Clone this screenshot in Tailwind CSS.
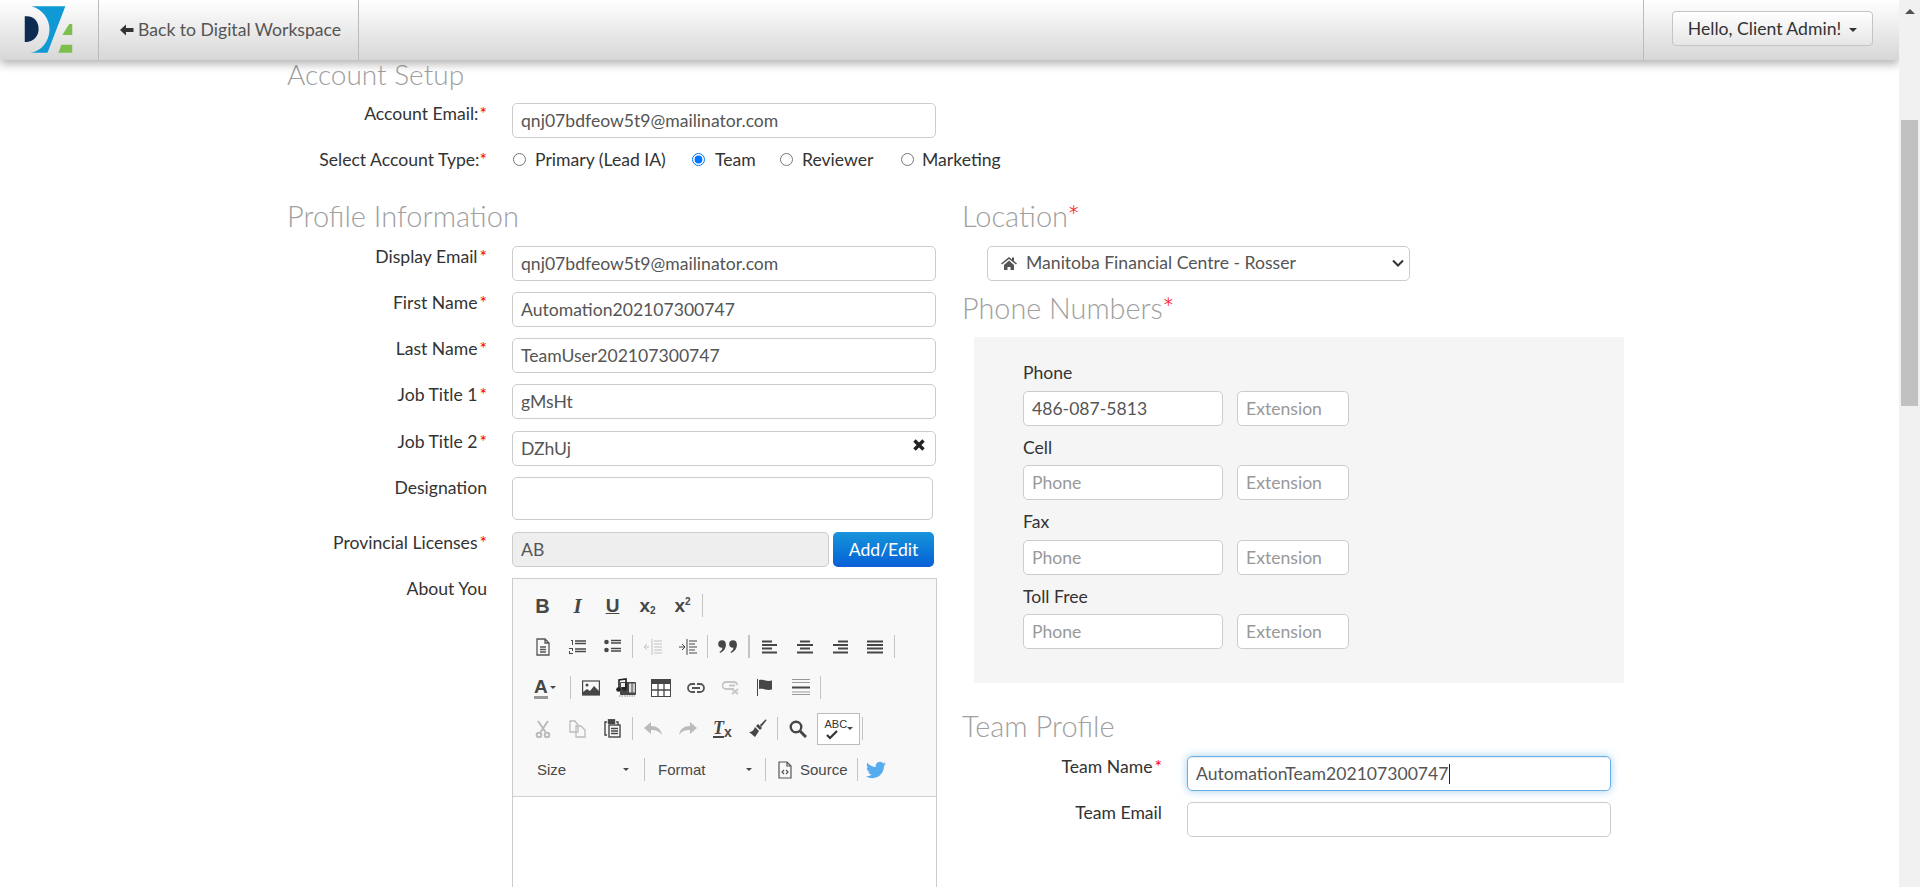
<!DOCTYPE html>
<html lang="en">
<head>
<meta charset="utf-8">
<title>Account Setup</title>
<script src="https://cdn.jsdelivr.net/npm/@tailwindcss/browser@4"></script>
</head>
<body class="m-0 overflow-hidden bg-white">
<div class="flex h-[887px] w-[1920px] overflow-hidden [font-family:Lato,sans-serif] text-[17.6px] leading-[20px] text-[#333]">
  <div class="relative h-full w-[1899px] overflow-hidden">
    <header class="relative z-10 flex h-[60px] items-stretch bg-gradient-to-b from-white to-[#d8d7d7] shadow-[0_4px_9px_rgba(0,0,0,0.3)]">
      <div class="flex w-[99px] items-center border-r border-[#bbb]">
        <svg width="99" height="60" viewBox="0 0 99 60">
          <path d="M25 16h2c8 0 12 6 12 13s-5 13-12 13h-2z" fill="#0d2c52"/>
          <path d="M32 6h34L48 53H30c12-1 20-12 20-24 0-10-7-20-18-23z" fill="#0f9ad6"/>
          <path d="M70 24h3v11h-10z" fill="#7cbf4d"/>
          <path d="M62 45h11v8H59z" fill="#7cbf4d"/>
        </svg>
      </div>
      <a class="flex w-[260px] items-center border-r border-[#bbb] pl-[20px] text-[#555]">
        <svg class="mr-[4px]" width="15" height="14" viewBox="0 0 15 14"><path d="M7 1.500 1 7l6 5.500V9h7.500V5H7z" fill="#333"/></svg>
        <span>Back to Digital Workspace</span>
      </a>
      <div class="ml-auto flex w-[256px] items-start border-l border-[#bbb] pl-[28px] pt-[11px]">
        <button class="flex h-[35px] w-[201px] items-center justify-center gap-[8px] rounded-[4px] border border-[#c4c4c4] bg-gradient-to-b from-white to-[#e6e6e6] text-[#333]">
          <span>Hello, Client Admin!</span>
          <span class="mt-[2px] h-0 w-0 border-x-[4.5px] border-t-[4.5px] border-x-transparent border-t-[#333]"></span>
        </button>
      </div>
    </header>

    <main class="pl-[287px]">
      <h2 class="h-[30px] text-[28px] leading-[28px] font-light text-[#a0a0a0]">Account Setup</h2>
      <div class="mt-[13px] flex items-start gap-[25px]">
        <label class="w-[200px] pt-px text-right">Account Email:<span class="ml-px text-[#f00]">*</span></label>
        <input class="h-[35px] w-[424px] rounded-[5px] border border-[#ccc] px-[8px] text-[#555]" value="qnj07bdfeow5t9@mailinator.com">
      </div>
      <div class="mt-[10px] flex h-[22px] items-center gap-[25px]">
        <label class="w-[200px] pt-px text-right">Select Account Type:<span class="text-[#f00]">*</span></label>
        <div class="flex items-center">
          <input type="radio" name="t" class="m-0 ml-px h-[13px] w-[13px]">
          <span class="ml-[9px] w-[157px] pt-px">Primary (Lead IA)</span>
          <input type="radio" name="t" checked class="m-0 h-[13px] w-[13px]">
          <span class="ml-[10px] w-[65px] pt-px">Team</span>
          <input type="radio" name="t" class="m-0 h-[13px] w-[13px]">
          <span class="ml-[9px] w-[99px] pt-px">Reviewer</span>
          <input type="radio" name="t" class="m-0 h-[13px] w-[13px]">
          <span class="ml-[8px] pt-px">Marketing</span>
        </div>
      </div>

      <div class="mt-[31px] flex">
        <section class="w-[675px] shrink-0">
          <h2 class="h-[30px] text-[29px] leading-[30px] font-light text-[#a0a0a0]">Profile Information</h2>
          <div class="mt-[15px] flex items-start gap-[25px]">
            <label class="w-[200px] pt-px text-right">Display Email<span class="ml-[2px] text-[#f00]">*</span></label>
            <input class="h-[35px] w-[424px] rounded-[5px] border border-[#ccc] px-[8px] text-[#555]" value="qnj07bdfeow5t9@mailinator.com">
          </div>
          <div class="mt-[11px] flex items-start gap-[25px]">
            <label class="w-[200px] pt-px text-right">First Name<span class="ml-[2px] text-[#f00]">*</span></label>
            <input class="h-[35px] w-[424px] rounded-[5px] border border-[#ccc] px-[8px] text-[#555]" value="Automation202107300747">
          </div>
          <div class="mt-[11px] flex items-start gap-[25px]">
            <label class="w-[200px] pt-px text-right">Last Name<span class="ml-[2px] text-[#f00]">*</span></label>
            <input class="h-[35px] w-[424px] rounded-[5px] border border-[#ccc] px-[8px] text-[#555]" value="TeamUser202107300747">
          </div>
          <div class="mt-[11px] flex items-start gap-[25px]">
            <label class="w-[200px] pt-px text-right">Job Title 1<span class="ml-[2px] text-[#f00]">*</span></label>
            <input class="h-[35px] w-[424px] rounded-[5px] border border-[#ccc] px-[8px] text-[#555]" value="gMsHt">
          </div>
          <div class="mt-[12px] flex items-start gap-[25px]">
            <label class="w-[200px] pt-px text-right">Job Title 2<span class="ml-[2px] text-[#f00]">*</span></label>
            <div class="relative w-[424px]">
              <input class="h-[35px] w-full rounded-[5px] border border-[#ccc] px-[8px] text-[#555]" value="DZhUj">
              <svg class="absolute right-[10px] top-[7px]" width="14" height="14" viewBox="0 0 14 14"><path d="M2.500 2.500l9 9M11.500 2.500l-9 9" stroke="#222" stroke-width="3.400"/></svg>
            </div>
          </div>
          <div class="mt-[11px] flex items-start gap-[25px]">
            <label class="w-[200px] pt-px text-right">Designation</label>
            <textarea class="h-[43px] w-[421px] resize-none rounded-[5px] border border-[#ccc] px-[8px] text-[#555]"></textarea>
          </div>
          <div class="mt-[12px] flex items-start gap-[25px]">
            <label class="w-[200px] pt-px text-right">Provincial Licenses<span class="ml-[2px] text-[#f00]">*</span></label>
            <div class="flex gap-[4px]">
              <input readonly class="h-[35px] w-[317px] rounded-[5px] border border-[#ccc] bg-[#eee] px-[8px] text-[#555]" value="AB">
              <button class="h-[35px] w-[101px] rounded-[5px] bg-gradient-to-b from-[#1a94da] to-[#0b5fd6] text-white">Add/Edit</button>
            </div>
          </div>
          <div class="mt-[11px] flex items-start gap-[25px]">
            <label class="w-[200px] pt-px text-right">About You</label>
            <div class="w-[425px] border border-[#ccc] bg-white">
              <div class="flex h-[218px] flex-col border-b border-[#d1d1d1] bg-[#f8f8f8] pl-[12px] pt-[6px] [font-family:'Liberation_Sans',sans-serif] text-[#474747]">

                <div class="flex h-[41px] items-center">
                  <span class="flex w-[35px] justify-center text-[20px] font-bold">B</span>
                  <span class="flex w-[35px] justify-center [font-family:'Liberation_Serif',serif] text-[21px] font-bold italic">I</span>
                  <span class="flex w-[35px] justify-center text-[19px] font-bold underline">U</span>
                  <span class="flex w-[35px] items-end justify-center text-[19px] leading-[20px] font-bold"><span>x</span><span class="text-[10px] leading-[11px]">2</span></span>
                  <span class="flex w-[35px] items-start justify-center text-[19px] leading-[20px] font-bold"><span>x</span><span class="text-[10px] leading-[11px]">2</span></span>
                  <span class="mx-[2px] h-[23px] w-px bg-[#c4c4c4]"></span>
                </div>

                <div class="flex h-[41px] items-center">
                  <span class="flex w-[35px] justify-center"><svg width="16" height="18" viewBox="0 0 16 18" fill="none" stroke="#555" stroke-width="1.300"><path d="M2 1h8l4 4v12H2zM10 1v4h4M5 9h6M5 11.500h6M5 14h6"/></svg></span>
                  <span class="flex w-[35px] justify-center"><svg width="17" height="16" viewBox="0 0 17 16"><path d="M6 2h11M6 4.500h11M6 10h11M6 12.500h11" stroke="#474747" stroke-width="1.300"/><path d="M2 1h2v5H3V2H2zM0 9h4v3H1v2h3v1H0v-3h3v-2H0z" fill="#474747"/></svg></span>
                  <span class="flex w-[35px] justify-center"><svg width="17" height="15" viewBox="0 0 17 15"><circle cx="2.500" cy="3" r="2.300" fill="#474747"/><circle cx="2.500" cy="11" r="2.300" fill="#474747"/><path d="M7 1.500h10M7 4h10M7 9.500h10M7 12h10" stroke="#474747" stroke-width="1.300"/></svg></span>
                  <span class="mx-[2px] h-[23px] w-px bg-[#c4c4c4]"></span>
                  <span class="flex w-[35px] justify-center opacity-30"><svg width="18" height="16" viewBox="0 0 18 16"><path d="M8 0v16" stroke="#474747"/><path d="M10 2h8M10 5h8M10 8h8M10 11h8M10 14h8" stroke="#474747" stroke-width="1.200"/><path d="M0 8h5M3 5 0 8l3 3" stroke="#474747" fill="none"/></svg></span>
                  <span class="flex w-[35px] justify-center"><svg width="18" height="16" viewBox="0 0 18 16"><path d="M8 0v16" stroke="#474747"/><path d="M10 2h8M10 5h6M10 8h8M10 11h6M10 14h8" stroke="#474747" stroke-width="1.200"/><path d="M0 8h6M3 5l3 3-3 3" stroke="#474747" fill="none"/></svg></span>
                  <span class="mx-[2px] h-[23px] w-px bg-[#c4c4c4]"></span>
                  <span class="flex w-[35px] justify-center"><svg width="19" height="13" viewBox="0 0 19 13" fill="#474747"><circle cx="4" cy="4" r="3.800"/><circle cx="15" cy="4" r="3.800"/><path d="M7.800 4C8 8 6 11.500 2 13l-.5-1c2-1 3-3 3-5zM18.800 4c.2 4-1.800 7.500-5.800 9l-.5-1c2-1 3-3 3-5z"/></svg></span>
                  <span class="ml-[3px] mr-[2px] h-[23px] w-[2px] bg-[#c4c4c4]"></span>
                  <span class="flex w-[35px] justify-center"><svg width="16" height="14" viewBox="0 0 16 14"><path d="M0 1.500h10M0 5h15M0 8.500h10M0 12.500h15" stroke="#474747" stroke-width="2"/></svg></span>
                  <span class="flex w-[35px] justify-center"><svg width="16" height="14" viewBox="0 0 16 14"><path d="M3 1.500h10M0 5h16M3 8.500h10M0 12.500h16" stroke="#474747" stroke-width="2"/></svg></span>
                  <span class="flex w-[35px] justify-center"><svg width="16" height="14" viewBox="0 0 16 14"><path d="M6 1.500h10M1 5h15M6 8.500h10M1 12.500h15" stroke="#474747" stroke-width="2"/></svg></span>
                  <span class="flex w-[35px] justify-center"><svg width="16" height="14" viewBox="0 0 16 14"><path d="M0 1.500h16M0 5h16M0 8.500h16M0 12.500h16" stroke="#474747" stroke-width="2"/></svg></span>
                  <span class="mx-[2px] h-[23px] w-px bg-[#c4c4c4]"></span>
                </div>

                <div class="flex h-[41px] items-center">
                  <span class="flex w-[43px] items-center pl-[9px]">
                    <span class="border-b-[3px] border-[#999] text-[19px] leading-[19px] font-bold">A</span>
                    <span class="ml-[2px] h-0 w-0 border-x-[3.500px] border-t-[3.500px] border-x-transparent border-t-[#474747]"></span>
                  </span>
                  <span class="mx-[2px] h-[23px] w-px bg-[#c4c4c4]"></span>
                  <span class="flex w-[35px] justify-center"><svg width="18" height="16" viewBox="0 0 18 16"><rect x=".6" y="1" width="16.800" height="14" fill="none" stroke="#474747" stroke-width="1.200"/><circle cx="5" cy="5" r="1.500" fill="#474747"/><path d="M1 15v-3l4-3 3 2 4-5 5 5v4z" fill="#474747"/></svg></span>
                  <span class="flex w-[35px] justify-center"><svg width="20" height="19" viewBox="0 0 20 19"><rect x="4" y="4" width="16" height="13" rx="1" fill="#474747"/><path d="M3 18h16" stroke="#888" stroke-dasharray="1.500 1"/><rect x="13" y="5.500" width="2.500" height="9" fill="#ddd"/><rect x="16.500" y="5.500" width="2.500" height="9" fill="#ccc"/><path d="M3 11V2l7-1v9" fill="none" stroke="#222" stroke-width="1.600"/><circle cx="2.500" cy="11.500" r="2.300" fill="#222"/><circle cx="8.500" cy="10.500" r="2.300" fill="#222"/><path d="M5 5h4v4H5z" fill="#eee"/></svg></span>
                  <span class="flex w-[35px] justify-center"><svg width="20" height="18" viewBox="0 0 20 18"><rect x=".5" y=".5" width="19" height="17" fill="#fff" stroke="#474747"/><rect width="20" height="5" fill="#474747"/><path d="M7 5v13M13 5v13M0 11h20" stroke="#474747" stroke-width="1.300"/></svg></span>
                  <span class="flex w-[35px] justify-center"><svg width="18" height="10" viewBox="0 0 18 10" fill="none" stroke="#555" stroke-width="1.800"><path d="M8 1H5a4 4 0 0 0 0 8h3M10 1h3a4 4 0 0 1 0 8h-3M5 5h8"/></svg></span>
                  <span class="flex w-[35px] justify-center opacity-30"><svg width="18" height="14" viewBox="0 0 18 14" fill="none" stroke="#555" stroke-width="1.800"><path d="M12 8H4a3 3 0 0 1 0-7h8a3 3 0 0 1 3 3M7 4.500h6"/><path d="M10 8l6 5M16 8l-6 5"/></svg></span>
                  <span class="flex w-[35px] justify-center"><svg width="17" height="17" viewBox="0 0 17 17"><path d="M.5 0v17" stroke="#474747"/><path d="M2 1c5-1 7 2 13 .5v9c-6 1.500-8-1.500-13-.5z" fill="#474747"/></svg></span>
                  <span class="flex w-[35px] justify-center"><svg width="18" height="19" viewBox="0 0 18 19"><path d="M0 1.500h18M0 4.500h18M0 14h18M0 16.500h18" stroke="#999" stroke-width="1.200"/><path d="M0 9.500h18" stroke="#474747" stroke-width="2"/></svg></span>
                  <span class="mx-[2px] h-[23px] w-px bg-[#c4c4c4]"></span>
                </div>

                <div class="flex h-[41px] items-center">
                  <span class="flex w-[35px] justify-center opacity-30"><svg width="16" height="18" viewBox="0 0 16 18" fill="none" stroke="#333" stroke-width="2"><path d="M3 1l7.500 11M13 1 5.500 12"/><circle cx="4" cy="15" r="2.300"/><circle cx="12" cy="15" r="2.300"/></svg></span>
                  <span class="flex w-[35px] justify-center opacity-30"><svg width="17" height="18" viewBox="0 0 17 18" fill="none" stroke="#333" stroke-width="1.300"><path d="M1 1h5l3 4v7H1zM7 6h5l4 4v7H7z" fill="#f8f8f8"/></svg></span>
                  <span class="flex w-[35px] justify-center"><svg width="17" height="19" viewBox="0 0 17 19" fill="none" stroke="#474747" stroke-width="1.400"><path d="M3 3H1v13h2M12 3h2v3"/><rect x="5" y="6" width="11" height="12" fill="#f8f8f8"/><path d="M7 9.500h7M7 12h7M7 14.500h7"/><rect x="4.500" y=".8" width="6" height="3.500" fill="#474747"/></svg></span>
                  <span class="mx-[2px] h-[23px] w-px bg-[#c4c4c4]"></span>
                  <span class="flex w-[35px] justify-center opacity-30"><svg width="18" height="13" viewBox="0 0 18 13"><path d="M7 0v4c6 0 10 3 11 9-3-4-6-5-11-5v4L0 6z" fill="#333"/></svg></span>
                  <span class="flex w-[35px] justify-center opacity-30"><svg width="18" height="13" viewBox="0 0 18 13"><path d="M11 0v4C5 4 1 7 0 13c3-4 6-5 11-5v4l7-6z" fill="#333"/></svg></span>
                  <span class="flex w-[35px] items-end justify-center"><span class="border-b-[2px] border-[#474747] [font-family:'Liberation_Serif',serif] text-[18px] leading-[16px] font-bold italic">T</span><span class="text-[14px] leading-[12px] font-bold">x</span></span>
                  <span class="flex w-[35px] justify-center"><svg width="19" height="19" viewBox="0 0 19 19" fill="#474747"><path d="M12 6l1-1 4-4c1-1 2 0 1 1l-4 5-1 1zM10 5l4 4-2 2-4-4zM7 8l4 4-4 6-6-5c3 0 5-2 6-5z"/></svg></span>
                  <span class="mx-[2px] h-[23px] w-px bg-[#c4c4c4]"></span>
                  <span class="flex w-[35px] justify-center"><svg width="18" height="18" viewBox="0 0 18 18" fill="none" stroke="#474747"><circle cx="7" cy="7" r="5.300" stroke-width="2.400"/><path d="M11 11l6 6" stroke-width="3"/></svg></span>
                  <span class="ml-[2px] flex h-[32px] w-[43px] items-center justify-center gap-[2px] border border-[#bcbcbc] bg-white">
                    <span class="block h-[22px] w-[18px]">
                      <span class="block text-[11px] leading-[12px] font-normal text-[#333]">ABC</span>
                      <svg class="block" width="16" height="10" viewBox="0 0 16 10"><path d="M2 5l3 3 7-7" fill="none" stroke="#333" stroke-width="2.200"/></svg>
                    </span>
                    <span class="ml-[2px] h-0 w-0 border-x-[3.500px] border-t-[3.500px] border-x-transparent border-t-[#474747]"></span>
                  </span>
                  <span class="mx-[2px] h-[23px] w-px bg-[#c4c4c4]"></span>
                </div>

                <div class="flex h-[41px] items-center text-[15px] text-[#484848]">
                  <span class="flex w-[105px] items-center justify-between pl-[12px] pr-[1px]">Size<span class="h-0 w-0 border-x-[3.500px] border-t-[3.500px] border-x-transparent border-t-[#474747]"></span></span>
                  <span class="ml-[14px] mr-[13px] h-[23px] w-px bg-[#c4c4c4]"></span>
                  <span class="flex w-[94px] items-center justify-between">Format<span class="h-0 w-0 border-x-[3.500px] border-t-[3.500px] border-x-transparent border-t-[#474747]"></span></span>
                  <span class="ml-[13px] mr-[12px] h-[23px] w-px bg-[#c4c4c4]"></span>
                  <span class="flex items-center gap-[8px]"><svg width="14" height="18" viewBox="0 0 14 18" fill="none" stroke="#555" stroke-width="1.200"><path d="M1 1h8l4 4v12H1zM9 1v4h4"/><path d="M6 9l-2 2 2 2M8 9l2 2-2 2"/></svg><span>Source</span></span>
                  <span class="ml-[9px] mr-[8px] h-[23px] w-px bg-[#c4c4c4]"></span>
                  <svg width="20" height="20" viewBox="0 0 24 24"><path fill="#55acee" d="M23.953 4.570a10 10 0 01-2.825.775 4.958 4.958 0 002.163-2.723c-.951.555-2.005.959-3.127 1.184a4.920 4.920 0 00-8.384 4.482C7.690 8.095 4.067 6.130 1.640 3.162a4.822 4.822 0 00-.666 2.475c0 1.710.870 3.213 2.188 4.096a4.904 4.904 0 01-2.228-.616v.060a4.923 4.923 0 003.946 4.827 4.996 4.996 0 01-2.212.085 4.936 4.936 0 004.604 3.417 9.867 9.867 0 01-6.102 2.105c-.390 0-.779-.023-1.170-.067a13.995 13.995 0 007.557 2.209c9.053 0 13.998-7.496 13.998-13.985 0-.210 0-.420-.015-.630A9.935 9.935 0 0024 4.590z"/></svg>
                </div>
              </div>
              <div class="h-[200px]"></div>
            </div>
          </div>
        </section>

        <section class="flex-1">
          <h2 class="h-[30px] text-[29px] leading-[30px] font-light text-[#a0a0a0]">Location<span class="text-[#f00]">*</span></h2>
          <div class="ml-[25px] mt-[15px] flex h-[35px] w-[423px] items-center rounded-[5px] border border-[#ccc] pb-px pl-[13px] pr-[5px] text-[#555]">
            <svg class="mr-[9px]" width="16" height="14" viewBox="0 0 16 14"><path d="M8 1 0 7.500l1 1L8 3l7 5.500 1-1L13 5V1.500h-2v2zM3 9v5h3.500v-3h3v3H13V9L8 4.500z" fill="#555"/></svg>
            <span>Manitoba Financial Centre - Rosser</span>
            <svg class="ml-auto" width="12" height="8" viewBox="0 0 12 8"><path d="M1 1.500 6 6.500l5-5" fill="none" stroke="#333" stroke-width="2"/></svg>
          </div>
          <h2 class="mt-[12px] h-[30px] text-[28.8px] leading-[30px] font-light text-[#a0a0a0]">Phone Numbers<span class="text-[#f00]">*</span></h2>
          <div class="ml-[12px] mt-[14px] h-[346px] w-[650px] bg-[#f5f5f5] pl-[49px] pt-[26px]">
            <div class="h-[20px]">Phone</div>
            <div class="mt-[8px] flex gap-[14px]">
              <input class="h-[35px] w-[200px] rounded-[5px] border border-[#ccc] bg-white px-[8px] text-[#555] placeholder:text-[#999]" placeholder="Phone" value="486-087-5813">
              <input class="h-[35px] w-[112px] rounded-[5px] border border-[#ccc] bg-white px-[8px] text-[#555] placeholder:text-[#999]" placeholder="Extension">
            </div>
            <div class="mt-[12px] h-[20px]">Cell</div>
            <div class="mt-[7px] flex gap-[14px]">
              <input class="h-[35px] w-[200px] rounded-[5px] border border-[#ccc] bg-white px-[8px] text-[#555] placeholder:text-[#999]" placeholder="Phone">
              <input class="h-[35px] w-[112px] rounded-[5px] border border-[#ccc] bg-white px-[8px] text-[#555] placeholder:text-[#999]" placeholder="Extension">
            </div>
            <div class="mt-[12px] h-[20px]">Fax</div>
            <div class="mt-[8px] flex gap-[14px]">
              <input class="h-[35px] w-[200px] rounded-[5px] border border-[#ccc] bg-white px-[8px] text-[#555] placeholder:text-[#999]" placeholder="Phone">
              <input class="h-[35px] w-[112px] rounded-[5px] border border-[#ccc] bg-white px-[8px] text-[#555] placeholder:text-[#999]" placeholder="Extension">
            </div>
            <div class="mt-[12px] h-[20px]">Toll Free</div>
            <div class="mt-[7px] flex gap-[14px]">
              <input class="h-[35px] w-[200px] rounded-[5px] border border-[#ccc] bg-white px-[8px] text-[#555] placeholder:text-[#999]" placeholder="Phone">
              <input class="h-[35px] w-[112px] rounded-[5px] border border-[#ccc] bg-white px-[8px] text-[#555] placeholder:text-[#999]" placeholder="Extension">
            </div>
          </div>
          <h2 class="mt-[29px] h-[31px] text-[29px] leading-[28px] font-light text-[#a0a0a0]">Team Profile</h2>
          <div class="mt-[13px] flex items-start gap-[25px]">
            <label class="w-[200px] pt-px text-right">Team Name<span class="ml-[2px] text-[#f00]">*</span></label>
            <div class="flex h-[35px] w-[424px] items-center rounded-[5px] border border-[#66afe9] px-[8px] text-[#555] shadow-[inset_0_1px_1px_rgba(0,0,0,0.075),0_0_8px_rgba(102,175,233,0.6)]">AutomationTeam202107300747<span class="h-[20px] w-px bg-[#222]"></span></div>
          </div>
          <div class="mt-[11px] flex items-start gap-[25px]">
            <label class="w-[200px] pt-px text-right">Team Email</label>
            <input class="h-[35px] w-[424px] rounded-[5px] border border-[#ccc] px-[8px] text-[#555]">
          </div>
        </section>
      </div>
    </main>
  </div>

  <aside class="flex h-full w-[21px] flex-col items-center bg-[#f1f1f1]">
    <div class="mt-[9px] h-0 w-0 border-x-[5px] border-b-[5px] border-x-transparent border-b-[#505050]"></div>
    <div class="mt-[106px] h-[286px] w-[17px] bg-[#c1c1c1]"></div>
  </aside>
</div>
</body>
</html>
